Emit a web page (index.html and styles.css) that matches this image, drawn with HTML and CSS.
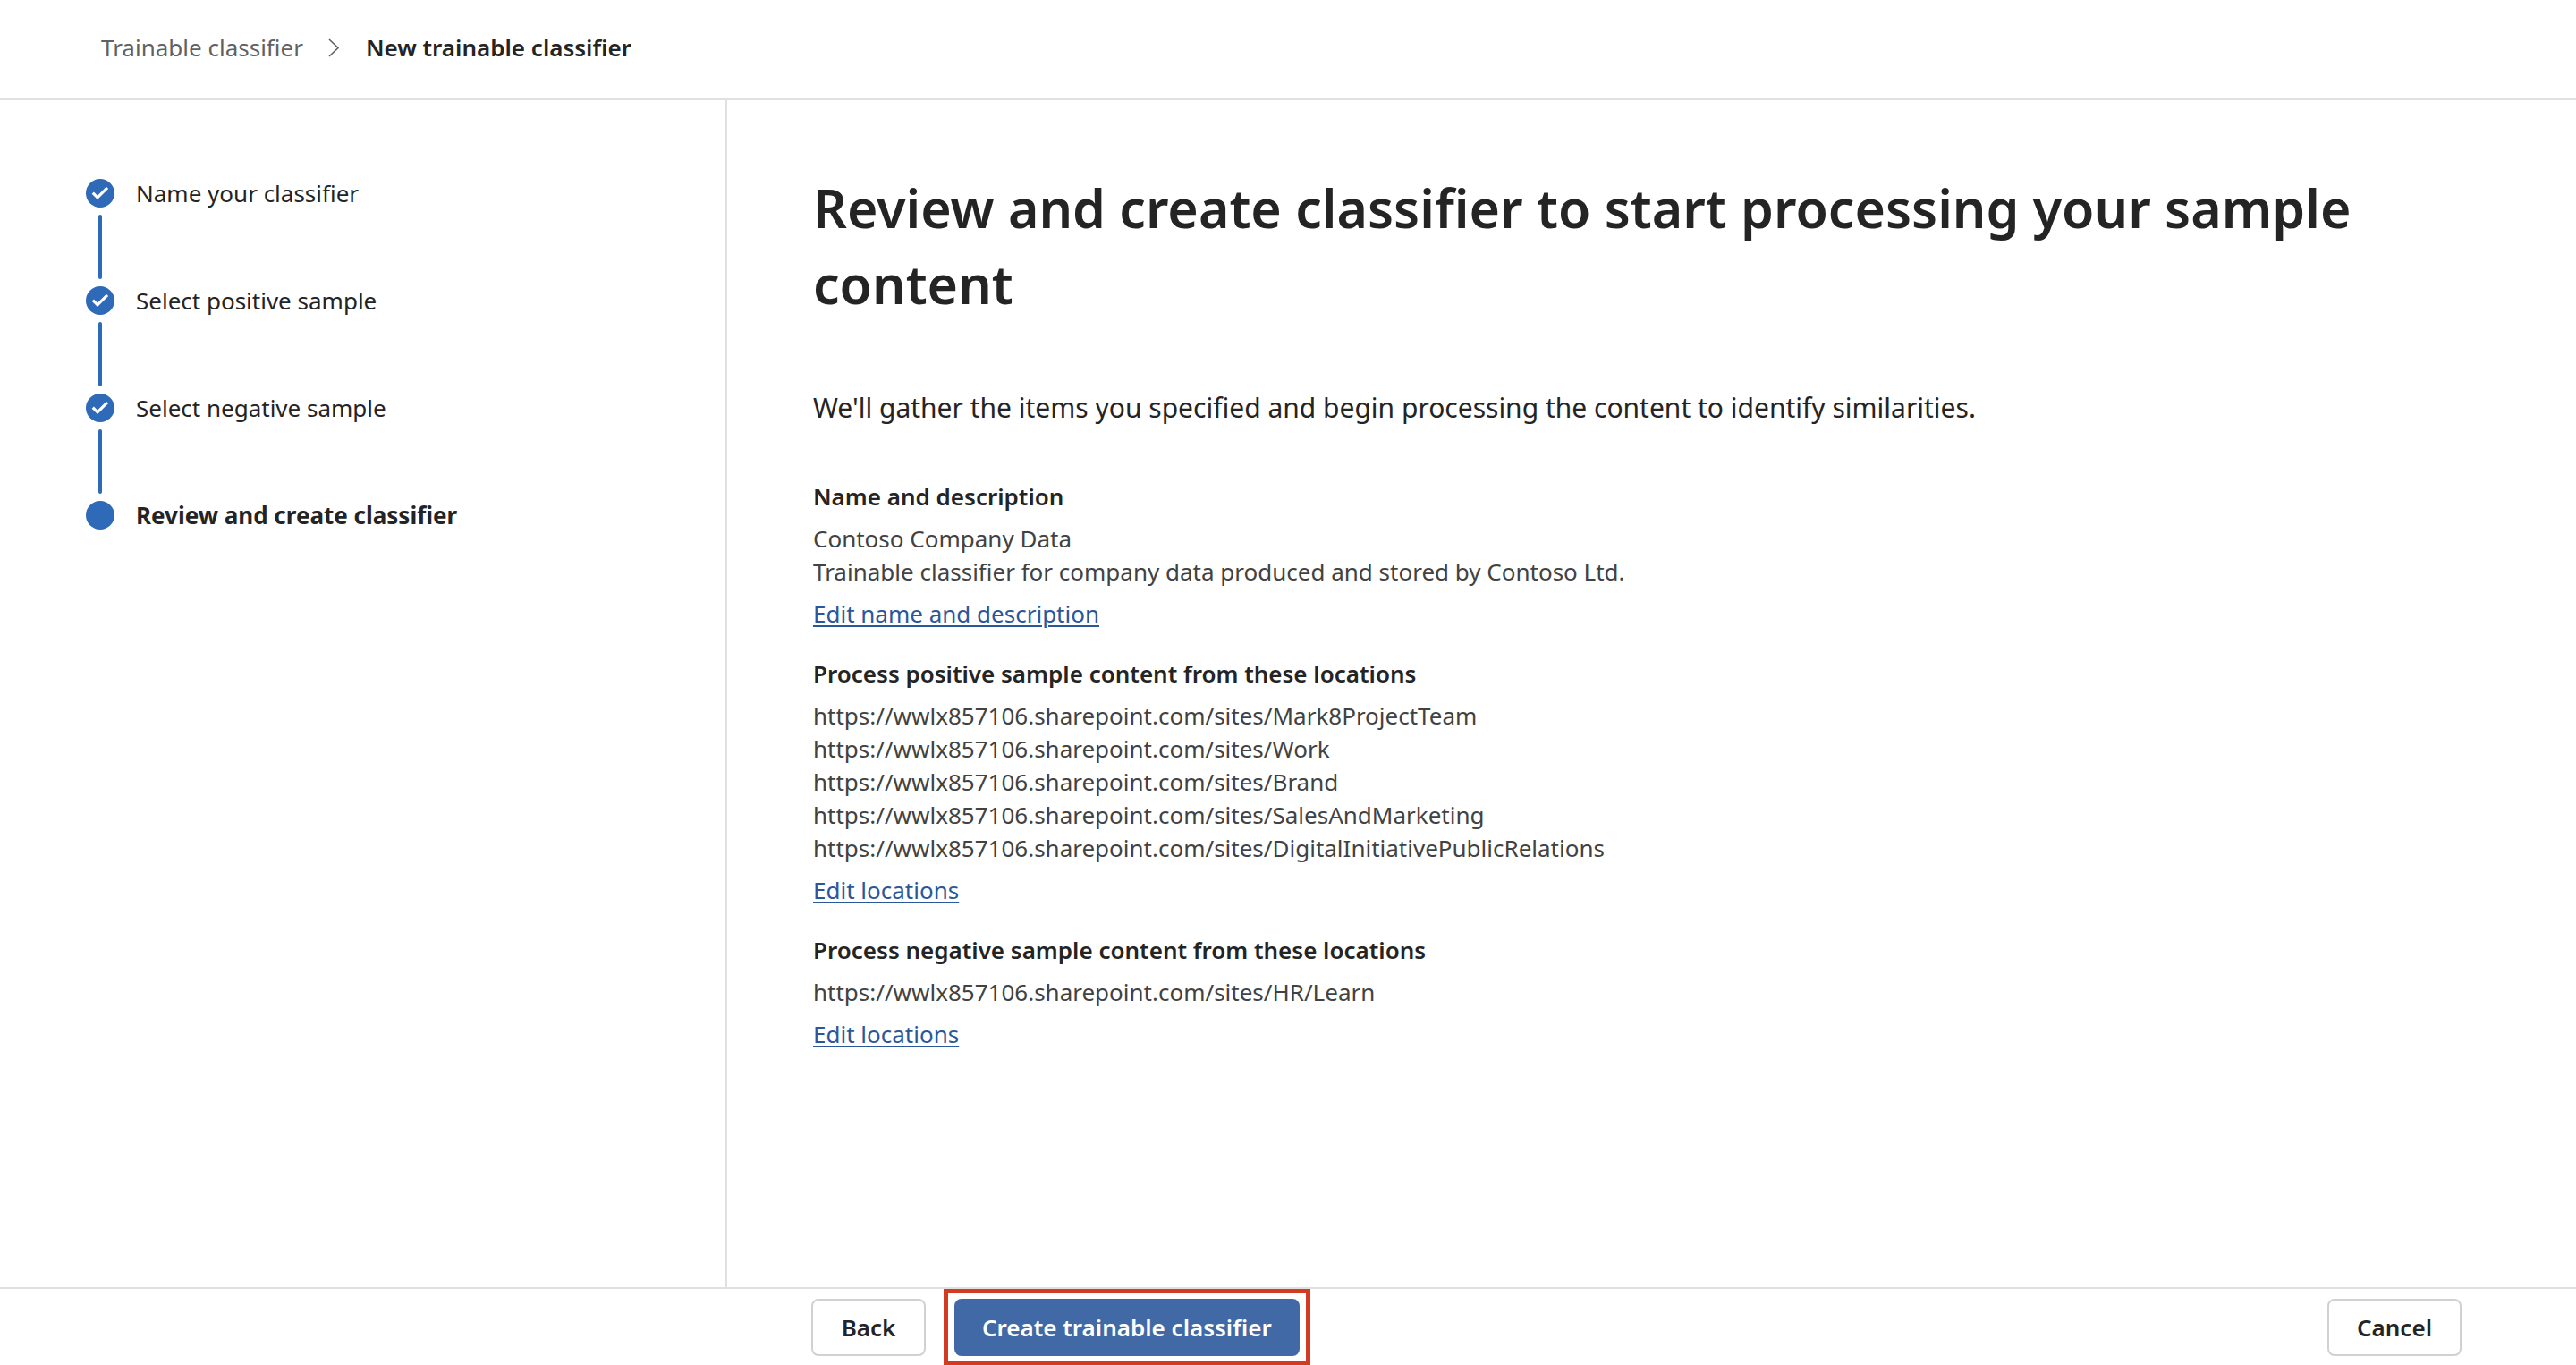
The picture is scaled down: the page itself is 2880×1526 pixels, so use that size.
FILE: index.html
```
<!DOCTYPE html>
<html lang="en">
<head>
<meta charset="utf-8">
<meta name="viewport" content="width=device-width, initial-scale=1">
<title>New trainable classifier</title>
<link rel="stylesheet" href="styles.css">
</head>
<body>
<header class="header">
  <nav aria-label="Breadcrumb">
    <ol class="breadcrumb">
      <li><a class="breadcrumb-link" href="#classifiers">Trainable classifier</a></li>
      <li class="breadcrumb-separator" aria-hidden="true">
        <svg width="14" height="24" viewBox="0 0 14 24"><path d="M1 2 L11 11.5 L1 21" fill="none" stroke="currentColor" stroke-width="1.6"/></svg>
      </li>
      <li class="breadcrumb-current" aria-current="page">New trainable classifier</li>
    </ol>
  </nav>
</header>

<div class="wizard">
  <aside class="sidebar">
    <ol class="steps">
      <li class="step">
        <svg class="step-icon" viewBox="0 0 32 32" aria-hidden="true"><circle cx="16" cy="16" r="16"/><path d="M7.8 15.6 L13 20.8 L24 9.8"/></svg>
        <span>Name your classifier</span>
      </li>
      <li class="step">
        <svg class="step-icon" viewBox="0 0 32 32" aria-hidden="true"><circle cx="16" cy="16" r="16"/><path d="M7.8 15.6 L13 20.8 L24 9.8"/></svg>
        <span>Select positive sample</span>
      </li>
      <li class="step">
        <svg class="step-icon" viewBox="0 0 32 32" aria-hidden="true"><circle cx="16" cy="16" r="16"/><path d="M7.8 15.6 L13 20.8 L24 9.8"/></svg>
        <span>Select negative sample</span>
      </li>
      <li class="step step-current" aria-current="step">
        <svg class="step-icon" viewBox="0 0 32 32" aria-hidden="true"><circle cx="16" cy="16" r="16"/></svg>
        <span>Review and create classifier</span>
      </li>
    </ol>
  </aside>

  <main class="content">
    <h1 class="title">Review and create classifier to start processing your sample content</h1>
    <p class="intro">We'll gather the items you specified and begin processing the content to identify similarities.</p>

    <div class="summary">
      <section class="summary-section">
        <h2 class="summary-heading">Name and description</h2>
        <div>
          <p>Contoso Company Data</p>
          <p>Trainable classifier for company data produced and stored by Contoso Ltd.</p>
        </div>
        <a class="edit-link" href="#name">Edit name and description</a>
      </section>
      <section class="summary-section">
        <h2 class="summary-heading">Process positive sample content from these locations</h2>
        <ul class="locations">
          <li>https://wwlx857106.sharepoint.com/sites/Mark8ProjectTeam</li>
          <li>https://wwlx857106.sharepoint.com/sites/Work</li>
          <li>https://wwlx857106.sharepoint.com/sites/Brand</li>
          <li>https://wwlx857106.sharepoint.com/sites/SalesAndMarketing</li>
          <li>https://wwlx857106.sharepoint.com/sites/DigitalInitiativePublicRelations</li>
        </ul>
        <a class="edit-link" href="#positive">Edit locations</a>
      </section>
      <section class="summary-section">
        <h2 class="summary-heading">Process negative sample content from these locations</h2>
        <ul class="locations">
          <li>https://wwlx857106.sharepoint.com/sites/HR/Learn</li>
        </ul>
        <a class="edit-link" href="#negative">Edit locations</a>
      </section>
    </div>
  </main>
</div>

<footer class="footer">
  <button class="button" type="button">Back</button>
  <div class="highlight">
    <button class="button button-primary" type="button">Create trainable classifier</button>
  </div>
  <button class="button button-cancel" type="button">Cancel</button>
</footer>
</body>
</html>
```

FILE: styles.css
```
:root {
  --text: #242424;
  --text-secondary: #424242;
  --text-muted: #616161;
  --line: #e0e0e0;
  --accent: #2f6ab8;
}

* {
  box-sizing: border-box;
}

body {
  margin: 0;
  min-height: 100vh;
  display: flex;
  flex-direction: column;
  background: #fff;
  color: var(--text);
  font-family: "Segoe UI", "Noto Sans", sans-serif;
  font-size: 26px;
  line-height: 37px;
}

h1, h2, p, ol, ul {
  margin: 0;
  padding: 0;
}

ol, ul {
  list-style: none;
}

/* Header */

.header {
  padding: 35px 113px 38px;
  border-bottom: 2px solid var(--line);
}

.breadcrumb {
  display: flex;
  align-items: center;
  gap: 28px;
}

.breadcrumb-link {
  color: var(--text-muted);
  text-decoration: none;
}

.breadcrumb-separator {
  display: flex;
  color: var(--text-muted);
}

.breadcrumb-current {
  font-weight: 600;
}

/* Wizard body */

.wizard {
  flex: 1;
  display: flex;
}

.sidebar {
  flex: none;
  width: 813px;
  padding: 85px 96px;
  border-right: 2px solid var(--line);
}

.steps {
  display: flex;
  flex-direction: column;
  gap: 82px;
  line-height: 38px;
}

.step {
  position: relative;
  display: flex;
  align-items: center;
  gap: 24px;
}

/* Connector between two step markers */
.step:not(:last-child)::after {
  content: "";
  position: absolute;
  top: 43px;
  left: 14px;
  width: 4px;
  height: 72px;
  border-radius: 2px;
  background: var(--accent);
}

.step-icon {
  flex: none;
  width: 32px;
  height: 32px;
  fill: var(--accent);
}

.step-icon path {
  fill: none;
  stroke: #fff;
  stroke-width: 3.2;
}

.step-current {
  font-weight: 700;
}

.content {
  flex: 1;
  min-width: 0;
  padding: 78px 128px 78px 96px;
}

.title {
  font-size: 59px;
  line-height: 85px;
  font-weight: 600;
}

.intro {
  margin-top: 76px;
  font-size: 30px;
  line-height: 40px;
}

.summary {
  display: flex;
  flex-direction: column;
  gap: 30px;
  margin-top: 61px;
  color: var(--text-secondary);
}

.summary-section {
  display: flex;
  flex-direction: column;
  align-items: flex-start;
  gap: 10px;
}

.summary-heading {
  color: var(--text);
  font-size: 26px;
  font-weight: 600;
}

.edit-link {
  color: #2b579a;
  text-decoration: underline;
  text-decoration-thickness: 2px;
  text-underline-offset: 3px;
}

/* Footer */

.footer {
  display: flex;
  align-items: baseline;
  gap: 20px;
  padding: 0 128px 0 907px;
  border-top: 2px solid var(--line);
}

.button {
  min-width: 128px;
  height: 64px;
  padding: 0 31px;
  border: 2px solid #d1d1d1;
  border-radius: 8px;
  background: #fff;
  color: var(--text);
  font: inherit;
  font-weight: 600;
}

.button-primary {
  padding: 0 29px;
  border-color: #4069a6;
  background: #4069a6;
  color: #fff;
}

.button-cancel {
  margin-left: auto;
}

.highlight {
  padding: 6px 7px 5px;
  border: 5px solid #d23a22;
}
```
